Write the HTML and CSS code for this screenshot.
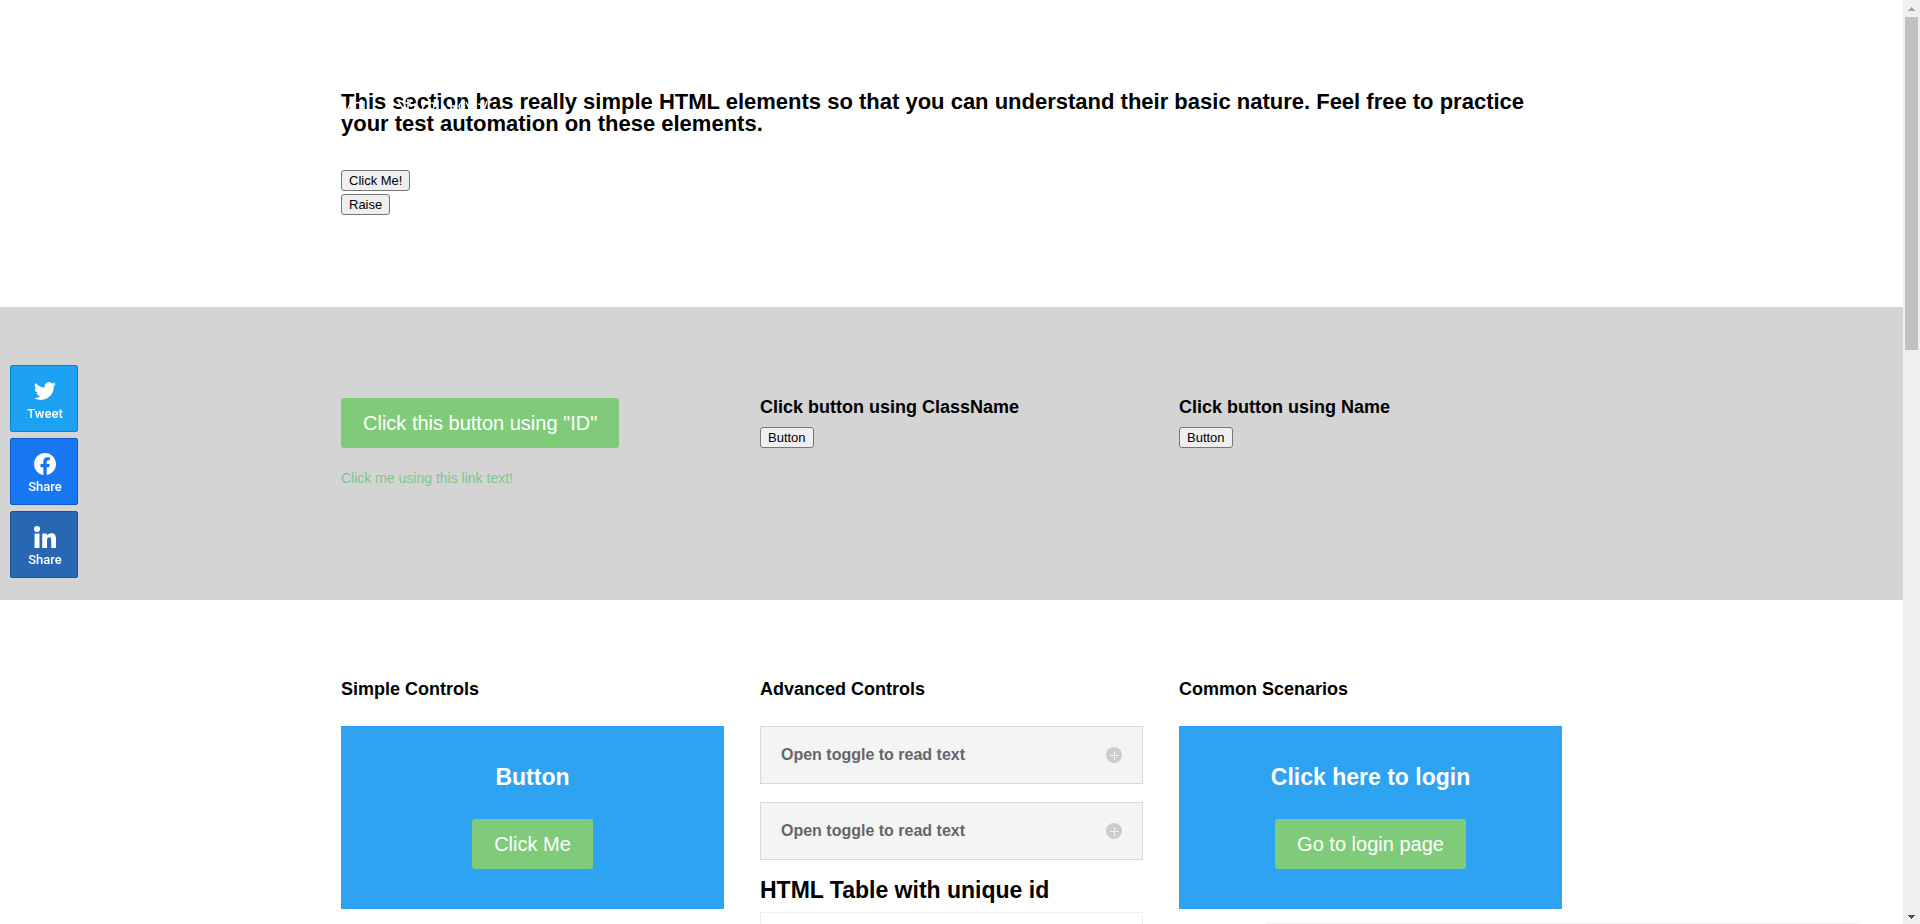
FILE: index.html
```html
<!DOCTYPE html>
<html lang="en">
<head>
<meta charset="utf-8">
<title>Simple HTML Elements For Automation</title>
<link rel="stylesheet" href="styles.css">
</head>
<body>
<div class="viewport">
<main class="page">
  <section class="section intro">
    <div class="row">
      <h2 class="title">This section has really simple HTML elements so that you can understand their basic nature. Feel free to practice your test automation on these elements.</h2>
      <svg class="ghost" viewBox="0 0 150 18" aria-hidden="true">
        <g fill="none" stroke="#fff" stroke-width="1.500">
          <path d="M1 4l5 11M11 3l-5 12M13 9q4-5 7 0t-6 5M23 5v10"/>
          <path d="M53 6q-4 4 0 8M57 5l6 9M67 3v11M64 7h6M74 7v7h6M84 5l-3 9M88 8q5-3 5 2t-5 3M97 4v10M101 7l5 7M110 7v7M109 10h7M120 7q-4 3 0 7M125 6l4 8M133 7v7M137 8q5 0 4 6M146 5l-3 9"/>
        </g>
      </svg>
      <div class="stack">
        <button class="native" type="button">Click Me!</button>
        <button class="native" type="button">Raise</button>
      </div>
    </div>
  </section>

  <section class="section band">
    <div class="row columns">
      <div class="links">
        <a class="cta" href="#id">Click this button using "ID"</a>
        <a class="textlink" href="#link">Click me using this link text!</a>
      </div>
      <div>
        <h4 class="label">Click button using ClassName</h4>
        <button class="native" type="button">Button</button>
      </div>
      <div>
        <h4 class="label">Click button using Name</h4>
        <button class="native" type="button">Button</button>
      </div>
    </div>
  </section>

  <section class="section controls">
    <div class="row columns">
      <div>
        <h4 class="heading">Simple Controls</h4>
        <div class="promo">
          <h2 class="promo-title">Button</h2>
          <a class="cta" href="#click">Click Me</a>
        </div>
      </div>
      <div>
        <h4 class="heading">Advanced Controls</h4>
        <button class="toggle" type="button">Open toggle to read text
          <svg class="plus" viewBox="0 0 16 16"><circle cx="8" cy="8" r="8" fill="#ccc"/><path d="M8.500 4v9M4 8.500h9" stroke="#f4f4f4"/></svg>
        </button>
        <button class="toggle" type="button">Open toggle to read text
          <svg class="plus" viewBox="0 0 16 16"><circle cx="8" cy="8" r="8" fill="#ccc"/><path d="M8.500 4v9M4 8.500h9" stroke="#f4f4f4"/></svg>
        </button>
        <h2 class="table-title">HTML Table with unique id</h2>
        <table class="table"><tbody><tr><td></td></tr></tbody></table>
      </div>
      <div>
        <h4 class="heading">Common Scenarios</h4>
        <div class="promo">
          <h2 class="promo-title">Click here to login</h2>
          <a class="cta" href="#login">Go to login page</a>
        </div>
      </div>
    </div>
  </section>
</main>

<div class="scrollbar">
  <svg class="arrow" viewBox="0 0 17 17"><path d="M8 7h1v1h1v1h1v1h1v1H5v-1h1V9h1V8h1z" fill="#a3a3a3"/></svg>
  <div class="thumb"></div>
  <svg class="arrow" viewBox="0 0 17 17"><path d="M5 8h7v1h-1v1h-1v1H9v1H8v-1H7v-1H6V9H5z" fill="#505050"/></svg>
</div>
</div>

<nav class="share">
  <a class="network twitter" href="#tweet">
    <svg viewBox="0 0 24 24"><path d="M23.95 4.57a10 10 0 0 1-2.82.77 4.96 4.96 0 0 0 2.16-2.72c-.95.55-2 .95-3.13 1.18a4.92 4.92 0 0 0-8.38 4.48C7.69 8.1 4.07 6.13 1.64 3.16a4.9 4.9 0 0 0 1.52 6.57 4.9 4.9 0 0 1-2.23-.61v.06a4.92 4.92 0 0 0 3.95 4.83 5 5 0 0 1-2.21.08 4.94 4.94 0 0 0 4.6 3.42A9.87 9.87 0 0 1 0 19.54a13.99 13.99 0 0 0 7.56 2.21c9.05 0 14-7.5 14-13.98 0-.21 0-.42-.02-.63a9.94 9.94 0 0 0 2.46-2.55z" fill="#fff"/></svg>
    Tweet
  </a>
  <a class="network facebook" href="#facebook">
    <svg viewBox="0 0 24 24"><path d="M24 12.07C24 5.41 18.63 0 12 0S0 5.41 0 12.07C0 18.1 4.39 23.1 10.13 24v-8.44H7.08v-3.49h3.05V9.41c0-3.02 1.79-4.69 4.53-4.69 1.31 0 2.68.24 2.68.24v2.97h-1.51c-1.49 0-1.96.93-1.96 1.89v2.25h3.33l-.53 3.49h-2.8V24C19.61 23.1 24 18.1 24 12.07z" fill="#fff"/></svg>
    Share
  </a>
  <a class="network linkedin" href="#linkedin">
    <svg viewBox="0 0 24 24"><circle cx="3.3" cy="3.3" r="3.3" fill="#fff"/><path d="M.6 8.2H6V24H.6zM9 8.2h5v2.2c.8-1.5 2.5-2.6 4.9-2.6 4.2 0 5.1 2.8 5.1 6.5V24h-5.2v-8.5c0-1.900-.1-3.200-2.100-3.200-2 0-2.500 1.500-2.500 3.300V24H9z" fill="#fff"/></svg>
    Share
  </a>
</nav>
<div class="drawer"></div>
</body>
</html>
```
FILE: styles.css
```css
* { box-sizing: border-box; }

body {
  margin: 0;
  background: #fff;
  color: #000;
  font-family: "Liberation Sans", Arial, sans-serif;
  font-size: 14px;
  line-height: 24px;
}

h2, h4 { margin: 0; }
a { text-decoration: none; }

.viewport {
  display: flex;
  height: 100vh;
  overflow: hidden;
}

.page { flex: 1; }

.row {
  position: relative;
  width: 80%;
  max-width: 1221px;
  margin: 0 auto;
}

.columns {
  display: grid;
  grid-template-columns: repeat(3, 1fr);
  gap: 36px;
}

.intro { padding: 91px 0 92px; }

.title {
  font-size: 22px;
  line-height: 22px;
}

.ghost {
  position: absolute;
  top: 5px;
  left: 0;
  width: 150px;
  height: 18px;
}

.stack {
  display: flex;
  flex-direction: column;
  align-items: flex-start;
  gap: 3px;
  padding-top: 35px;
}

.native {
  display: block;
  height: 21px;
  padding: 0 7px;
  border: 1px solid #767676;
  border-radius: 3px;
  background: #efefef;
  color: #000;
  font: 13px "Liberation Sans", Arial, sans-serif;
}

.band {
  padding: 91px 0 110px;
  background: #d4d4d4;
}

.links {
  display: flex;
  flex-direction: column;
  align-items: flex-start;
  gap: 18px;
}

.cta {
  display: inline-block;
  padding: 8px 22px;
  border-radius: 3px;
  background: #7fcb7a;
  color: #fff;
  font-size: 20px;
  line-height: 34px;
}

.textlink { color: #7cc68d; }

.label {
  padding-bottom: 11px;
  font-size: 18px;
  line-height: 18px;
}

.controls { padding-top: 80px; }

.heading {
  padding-bottom: 28px;
  font-size: 18px;
  line-height: 18px;
}

.promo {
  padding: 40px;
  background: #2ea3f2;
  text-align: center;
}

.promo-title {
  padding-bottom: 31px;
  color: #fff;
  font-size: 23px;
  line-height: 22px;
}

.toggle {
  display: flex;
  align-items: center;
  justify-content: space-between;
  width: 100%;
  height: 58px;
  margin-bottom: 18px;
  padding: 0 20px;
  border: 1px solid #d9d9d9;
  background: #f4f4f4;
  color: #666;
  font: bold 16px "Liberation Sans", Arial, sans-serif;
}

.plus { width: 16px; height: 16px; }

.table-title {
  padding-bottom: 10px;
  font-size: 23px;
  line-height: 24px;
}

.table {
  width: 100%;
  border: 1px solid #eee;
  border-collapse: collapse;
}

.table td { height: 40px; }

.scrollbar {
  display: flex;
  flex-direction: column;
  width: 17px;
  background: #f0f0f0;
}

.arrow { width: 17px; height: 17px; }

.thumb {
  height: 36%;
  margin: 0 2px auto;
  background: #c1c1c1;
}

.share {
  position: fixed;
  top: 365px;
  left: 10px;
  display: flex;
  flex-direction: column;
  gap: 6px;
}

.network {
  display: flex;
  flex-direction: column;
  align-items: center;
  width: 68px;
  height: 67px;
  padding: 14px 0 0 2px;
  border: 1px solid;
  border-radius: 2px;
  color: #fff;
  font: 500 13px/24px Roboto, sans-serif;
}

.network svg { width: 22px; height: 22px; }
.twitter { background: #1da1f2; border-color: #0c85d0; }
.facebook { background: #1877f2; border-color: #0b5fcc; }
.linkedin { background: #2867b2; border-color: #1f5290; }

.drawer {
  position: fixed;
  right: 60px;
  bottom: 0;
  width: 595px;
  height: 1px;
  background: #f3f3f3;
}
```
